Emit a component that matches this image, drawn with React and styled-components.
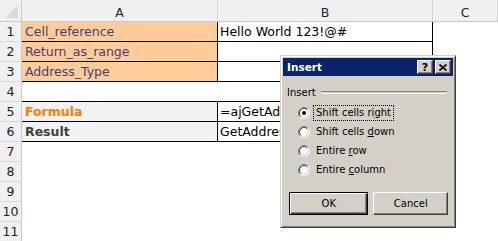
import React from "react"
import styled, { createGlobalStyle } from "styled-components"

const GlobalStyle = createGlobalStyle`
  html, body {
    margin: 0;
    padding: 0;
    background: #ffffff;
  }
  body {
    width: 498px;
    height: 241px;
    overflow: hidden;
    font-family: "DejaVu Sans", Verdana, sans-serif;
  }
`

const Sheet = styled.div`
  position: relative;
  width: 498px;
  height: 241px;
  overflow: hidden;
  background: #ffffff;
`

const Row = styled.div`
  display: grid;
  grid-template-columns: 22px 196px 215px 65px;
  height: ${(p) => p.$height || 20}px;
`

const Corner = styled.div`
  position: relative;
  background: #f0f0f0;
  border-right: 1px solid #c8c8c8;
  border-bottom: 1px solid #c8c8c8;
  box-sizing: border-box;

  &::after {
    content: "";
    position: absolute;
    right: 3px;
    bottom: 3px;
    width: 0;
    height: 0;
    border-left: 13px solid transparent;
    border-bottom: 13px solid #dadada;
  }
`

const ColHead = styled.div`
  display: flex;
  align-items: center;
  justify-content: center;
  background: #f0f0f0;
  color: #222;
  font-size: 12.5px;
  padding-top: 3px;
  box-sizing: border-box;
  border-right: 1px solid #d4d4d4;
  border-bottom: 1px solid #c8c8c8;
`

const RowHead = styled.div`
  display: flex;
  align-items: center;
  justify-content: center;
  background: #f0f0f0;
  color: #222;
  font-size: 12.5px;
  box-sizing: border-box;
  border-right: 1px solid #c8c8c8;
  border-bottom: 1px solid #d8d8d8;
`

const Cell = styled.div`
  display: flex;
  align-items: center;
  padding-left: ${(p) => p.$pad ?? 3}px;
  box-sizing: border-box;
  white-space: nowrap;
  overflow: hidden;
  font-size: 12.5px;
  background: ${(p) => p.$bg || "#ffffff"};
  color: ${(p) => p.$color || "#000000"};
  font-weight: ${(p) => (p.$bold ? "bold" : "normal")};
  border-right: 1px solid ${(p) => p.$right || "transparent"};
  border-bottom: 1px solid ${(p) => p.$bottom || "transparent"};
`

const Dialog = styled.div`
  position: absolute;
  left: 280px;
  top: 55px;
  width: 176px;
  height: 173px;
  box-sizing: border-box;
  background: #d4d0c8;
  border: 1px solid;
  border-color: #d4d0c8 #404040 #404040 #d4d0c8;
  box-shadow: inset 1px 1px #ffffff, inset -1px -1px #808080;
  padding: 2px;
  font-family: "DejaVu Sans", Tahoma, sans-serif;
  font-size: 10px;
  color: #000;
`

const TitleBar = styled.div`
  display: flex;
  align-items: center;
  height: 18px;
  padding: 0 2px 0 4px;
  background: #0a246a;
  color: #ffffff;
  font-weight: bold;
  font-size: 10.5px;
`

const TitleText = styled.span`
  flex: 1;
`

const TitleButton = styled.div`
  display: flex;
  align-items: center;
  justify-content: center;
  width: 16px;
  height: 14px;
  box-sizing: border-box;
  margin-left: ${(p) => p.$gap || 0}px;
  background: #d4d0c8;
  color: #000;
  font-size: 11px;
  font-weight: bold;
  border: 1px solid;
  border-color: #ffffff #404040 #404040 #ffffff;
  box-shadow: inset -1px -1px #808080;
`

const Body = styled.div`
  display: flex;
  flex-direction: column;
  padding: 8px 5px 0 4px;
`

const GroupHead = styled.div`
  display: flex;
  align-items: center;
  gap: 5px;
  height: 14px;
  margin-top: 1px;
`

const GroupLine = styled.div`
  flex: 1;
  height: 1px;
  border-top: 1px solid #808080;
  border-bottom: 1px solid #ffffff;
  margin-right: 1px;
`

const Options = styled.div`
  display: flex;
  flex-direction: column;
  margin-top: 4px;
  padding-left: 11px;
`

const Option = styled.div`
  display: flex;
  align-items: center;
  height: 19px;
  gap: 3px;
`

const OptionLabel = styled.span`
  padding: 1px 2px 2px;
  outline: ${(p) => (p.$focus ? "1px dotted #000" : "none")};
  outline-offset: -1px;
  border: 1px solid transparent;
`

const Key = styled.span`
  text-decoration: underline;
`

const Buttons = styled.div`
  display: flex;
  gap: 5px;
  margin-top: 13px;
  padding-left: 2px;
`

const Button = styled.div`
  display: flex;
  align-items: center;
  justify-content: center;
  width: ${(p) => p.$w}px;
  height: 23px;
  box-sizing: border-box;
  font-size: 10px;
  background: #d4d0c8;
  border: 1px solid;
  border-color: ${(p) =>
    p.$default ? "#000000" : "#ffffff #404040 #404040 #ffffff"};
  box-shadow: ${(p) =>
    p.$default
      ? "inset 1px 1px #ffffff, inset -1px -1px #404040, inset -2px -2px #808080"
      : "inset -1px -1px #808080"};
`

const Radio = ({ checked }) => (
  <svg width="12" height="12" viewBox="0 0 12 12">
    <circle cx="6" cy="6" r="5" fill="#ffffff" />
    <path d="M2.11 9.89 A5.5 5.5 0 0 1 9.89 2.11" stroke="#808080" fill="none" />
    <path d="M9.89 2.11 A5.5 5.5 0 0 1 2.11 9.89" stroke="#ffffff" fill="none" />
    <path d="M2.82 9.18 A4.5 4.5 0 0 1 9.18 2.82" stroke="#404040" fill="none" />
    <path d="M9.18 2.82 A4.5 4.5 0 0 1 2.82 9.18" stroke="#d4d0c8" fill="none" />
    {checked && <circle cx="6" cy="6" r="2" fill="#000000" />}
  </svg>
)

const CloseGlyph = () => (
  <svg width="8" height="7" viewBox="0 0 8 7">
    <path d="M0.5 0.5 L7.5 6.5 M7.5 0.5 L0.5 6.5" stroke="#000" strokeWidth="1.6" />
  </svg>
)

const INPUT = { $bg: "#ffcc99", $color: "#3f3f76" }
const BLACK = "#000000"

const App = () => {
  return (
    <>
      <GlobalStyle />
      <Sheet>
        <Row $height={22}>
          <Corner />
          <ColHead>A</ColHead>
          <ColHead>B</ColHead>
          <ColHead>C</ColHead>
        </Row>
        <Row>
          <RowHead>1</RowHead>
          <Cell {...INPUT} $right={BLACK} $bottom={BLACK}>Cell_reference</Cell>
          <Cell $pad={2} $right={BLACK} $bottom={BLACK}>Hello World 123!@#</Cell>
          <Cell />
        </Row>
        <Row>
          <RowHead>2</RowHead>
          <Cell {...INPUT} $right={BLACK} $bottom={BLACK}>Return_as_range</Cell>
          <Cell $right={BLACK} $bottom={BLACK} />
          <Cell />
        </Row>
        <Row>
          <RowHead>3</RowHead>
          <Cell {...INPUT} $right={BLACK} $bottom={BLACK}>Address_Type</Cell>
          <Cell $right={BLACK} $bottom={BLACK} />
          <Cell />
        </Row>
        <Row>
          <RowHead>4</RowHead>
          <Cell $bottom={BLACK} />
          <Cell $bottom={BLACK} $right={BLACK} />
          <Cell />
        </Row>
        <Row>
          <RowHead>5</RowHead>
          <Cell $bg="#f2f2f2" $color="#fa7d00" $bold $right={BLACK} $bottom={BLACK}>
            Formula
          </Cell>
          <Cell $pad={2} $right={BLACK} $bottom={BLACK}>=ajGetAddress(A1,A2,A3)</Cell>
          <Cell />
        </Row>
        <Row>
          <RowHead>6</RowHead>
          <Cell $bg="#f2f2f2" $color="#3f3f3f" $bold $right={BLACK} $bottom={BLACK}>
            Result
          </Cell>
          <Cell $pad={2} $right={BLACK} $bottom={BLACK}>GetAddress</Cell>
          <Cell />
        </Row>
        {[7, 8, 9, 10, 11].map((n) => (
          <Row key={n}>
            <RowHead>{n}</RowHead>
            <Cell />
            <Cell />
            <Cell />
          </Row>
        ))}

        <Dialog>
          <TitleBar>
            <TitleText>Insert</TitleText>
            <TitleButton>?</TitleButton>
            <TitleButton $gap={2}>
              <CloseGlyph />
            </TitleButton>
          </TitleBar>
          <Body>
            <GroupHead>
              <span>Insert</span>
              <GroupLine />
            </GroupHead>
            <Options>
              <Option>
                <Radio checked />
                <OptionLabel $focus>
                  Shift cells ri<Key>g</Key>ht
                </OptionLabel>
              </Option>
              <Option>
                <Radio />
                <OptionLabel>
                  Shift cells <Key>d</Key>own
                </OptionLabel>
              </Option>
              <Option>
                <Radio />
                <OptionLabel>
                  Entire <Key>r</Key>ow
                </OptionLabel>
              </Option>
              <Option>
                <Radio />
                <OptionLabel>
                  Entire <Key>c</Key>olumn
                </OptionLabel>
              </Option>
            </Options>
            <Buttons>
              <Button $default $w={80}>OK</Button>
              <Button $w={75}>Cancel</Button>
            </Buttons>
          </Body>
        </Dialog>
      </Sheet>
    </>
  )
}

export default App
